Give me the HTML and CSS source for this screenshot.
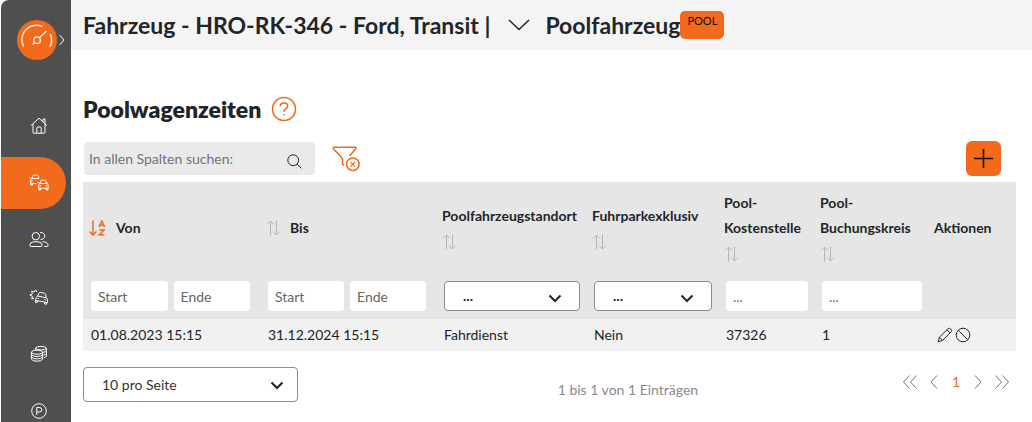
FILE: index.html
```
<!DOCTYPE html>
<html lang="de">
<head>
  <meta charset="UTF-8" />
  <meta name="viewport" content="width=device-width, initial-scale=1.0" />
  <title>Poolwagenzeiten</title>
  <link rel="stylesheet" href="styles.css">
</head>
<body>
  <div class="app">
    <aside class="sidebar">
      <div class="brand">
        <a href="#" class="logo" aria-label="Dashboard">
          <svg width="40" height="40" viewBox="0 0 40 40">
            <circle class="disc" cx="20" cy="20" r="20" />
            <path d="M6.5 26.5A14.5 14.5 0 0 1 25.5 6.6M33.3 14A14.5 14.5 0 0 1 32.8 26.8M22.3 17.8L29.5 11M15.5 24.5L17.6 22.4" />
            <circle cx="20" cy="20.2" r="3.3" />
          </svg>
        </a>
        <button class="expand" aria-label="Menü öffnen">
          <svg width="6" height="12" viewBox="0 0 6 12"><path d="M.5 1L5 6L.5 11" /></svg>
        </button>
      </div>
      <nav class="menu">
        <a href="#" aria-label="Start">
          <svg width="18" height="18" viewBox="0 0 18 18"><path d="M1 8.5L9 1.2L17 8.5M3 7V15.5Q3 16.2 3.7 16.2H14.3Q15 16.2 15 15.5V7M6.8 16V11Q6.8 10 7.8 10H10.2Q11.2 10 11.2 11V16M13 4.5V2H15V6.5" /></svg>
        </a>
        <a href="#" class="active" aria-label="Fahrzeuge">
          <svg width="20" height="18" viewBox="0 0 20 18"><path d="M7.5 9.5H1.5V6.5Q1.5 5 2.8 4.5L3.6 2.2Q3.9 1.2 5 1.2H8Q9 1.2 9.4 2.2L10 4M.3 3.7H1.8M2.8 4.5H10M2 7H3.7M1.8 9.5V11H3.6V9.5M9.5 14.2V11.5Q9.5 9.9 10.8 9.4L11.6 7.2Q11.9 6.2 13 6.2H15.7Q16.8 6.2 17.1 7.2L17.9 9.4Q19.2 9.9 19.2 11.5V14.2ZM9.8 14.2V15.9H11.6V14.2M17.1 14.2V15.9H18.9V14.2M10.8 9.4H17.9M10.5 11.8H12.2M16.5 11.8H18.2M8.3 8.6H9.8" /></svg>
        </a>
        <a href="#" aria-label="Fahrer">
          <svg width="20" height="18" viewBox="0 0 20 18"><circle cx="6.8" cy="5.2" r="3.7" /><path d="M11 1.7A3.5 3.5 0 1 1 11.5 8.4M.8 14.2Q1.2 10.8 4.5 10.8H9Q12.8 10.8 13.2 14.2Q13 15.5 11.8 15.5H2.2Q.8 15.5 .8 14.2ZM13.5 10.8Q18.5 10.6 19.2 14.2Q19 15.5 17.8 15.5H15.3" /></svg>
        </a>
        <a href="#" aria-label="Schäden">
          <svg width="20" height="18" viewBox="0 0 20 18"><path d="M5 10.2L2.8 11L3.4 8.3L.8 7L3.4 5.8L2.6 3.2L5.2 3.9L6.6 1.8L8 4M6.5 11.8Q6.8 9.3 8.6 8L9.9 5.2Q10.4 4.3 11.5 4.4L15.5 5.3Q16.7 5.7 16.8 6.8L17.2 9.8Q18.9 11 18.5 13L18.2 14.6L6.2 12.3ZM8.6 8L17.2 9.8M6.5 12.4L6.2 14.2L8.1 14.6L8.5 12.8M15.9 14.2L15.6 16L17.6 16.2L18 14.6M8.5 10.3L10 10.6M15.2 11.7L16.8 12" /></svg>
        </a>
        <a href="#" aria-label="Kosten">
          <svg width="18" height="18" viewBox="0 0 18 18"><ellipse cx="7" cy="7.2" rx="5.6" ry="2" /><path d="M1.4 7.2V14.2Q2.5 16.2 7 16.2T12.6 14.2V7.2M1.4 9.6Q2.5 11.5 7 11.5T12.6 9.6M1.4 12Q2.5 13.9 7 13.9T12.6 12M5.5 5V3.2Q6.5 1.4 11 1.4T16.4 3.2V11Q16 12.3 14 12.6M5.5 3.2Q6.5 5 11 5T16.4 3.2M13 7.3Q16 7 16.4 5.8M13.5 9.9Q16 9.5 16.4 8.4" /></svg>
        </a>
        <a href="#" aria-label="Parken">
          <svg width="18" height="18" viewBox="0 0 18 18"><circle cx="9" cy="9" r="7.3" /><path d="M6.8 13V5.5H9.5Q11.8 5.5 11.8 7.7T9.5 10H6.8" /></svg>
        </a>
      </nav>
    </aside>

    <div class="page">
      <header class="topbar">
        <h1>Fahrzeug - HRO-RK-346 - Ford, Transit |</h1>
        <button class="switcher" aria-label="Fahrzeug wechseln">
          <svg width="22" height="12" viewBox="0 0 22 12"><path d="M1 1L11 10.5L21 1" /></svg>
        </button>
        <h1>Poolfahrzeug</h1>
        <span class="badge">POOL</span>
      </header>

      <main class="content">
        <div class="heading">
          <h2>Poolwagenzeiten</h2>
          <a href="#" class="help" aria-label="Hilfe">
            <svg width="26" height="26" viewBox="0 0 26 26"><circle cx="13" cy="13" r="11.5" /><path d="M9.2 10.5Q9.2 7 13 7T16.6 10.2Q16.6 12 14.6 13T13 16M13 18V19.5" /></svg>
          </a>
        </div>

        <div class="toolbar">
          <div class="search">
            <input type="text" placeholder="In allen Spalten suchen:" aria-label="In allen Spalten suchen">
            <svg width="15" height="15" viewBox="0 0 15 15"><circle cx="6.2" cy="6.2" r="5.4" /><path d="M10.2 10.2L14.3 14.3" /></svg>
          </div>
          <button class="reset" aria-label="Filter zurücksetzen">
            <svg width="28" height="26" viewBox="0 0 28 26"><path d="M12 19.5L10.5 18V12.5L1.4 2.8Q.8 1.2 2.2 1.2H23Q24.8 1.2 23.8 2.8L17.5 10" /><circle cx="20.8" cy="18.2" r="6.3" /><path class="thin" d="M18.4 15.8L23.2 20.6M23.2 15.8L18.4 20.6" /></svg>
          </button>
          <button class="add" aria-label="Hinzufügen">
            <svg width="19" height="19" viewBox="0 0 19 19"><path d="M9.5 0V19M0 9.5H19" /></svg>
          </button>
        </div>

        <svg class="defs" aria-hidden="true">
          <symbol id="sort" viewBox="0 0 14 16"><path d="M4.5 15.5V1M1 4.5L4.5 1L8 4.5M10.5 .5V15M7 11.5L10.5 15L14 11.5" /></symbol>
          <symbol id="chevron" viewBox="0 0 14 9"><path d="M1.5 1.5L7 7L12.5 1.5" /></symbol>
        </svg>

        <table>
          <colgroup>
            <col class="c-from"><col class="c-to"><col class="c-place"><col class="c-excl"><col class="c-cost"><col class="c-book"><col class="c-act">
          </colgroup>
          <thead>
            <tr class="titles">
              <th>
                <div class="sortable">
                  <svg class="az" width="17" height="16" viewBox="0 0 17 16"><path d="M4 .5V15M.5 11.5L4 15L7.5 11.5" /><path d="M10 6.8L12.8 1L15.6 6.8M11 5.2H14.6M10.2 10H15.2L10.2 14.8H15.4" /></svg>
                  Von
                </div>
              </th>
              <th><div class="sortable"><svg class="sort" width="14" height="16"><use href="#sort" /></svg>Bis</div></th>
              <th>Poolfahrzeugstandort<br><svg class="sort" width="14" height="16"><use href="#sort" /></svg></th>
              <th>Fuhrparkexklusiv<br><svg class="sort" width="14" height="16"><use href="#sort" /></svg></th>
              <th>Pool-<br>Kostenstelle<br><svg class="sort" width="14" height="16"><use href="#sort" /></svg></th>
              <th>Pool-<br>Buchungskreis<br><svg class="sort" width="14" height="16"><use href="#sort" /></svg></th>
              <th>Aktionen</th>
            </tr>
            <tr class="filters">
              <td><div class="range"><input type="text" placeholder="Start" aria-label="Von Start"><input type="text" placeholder="Ende" aria-label="Von Ende"></div></td>
              <td><div class="range"><input type="text" placeholder="Start" aria-label="Bis Start"><input type="text" placeholder="Ende" aria-label="Bis Ende"></div></td>
              <td><div class="select"><select aria-label="Poolfahrzeugstandort"><option>...</option></select><svg width="14" height="9"><use href="#chevron" /></svg></div></td>
              <td><div class="select"><select aria-label="Fuhrparkexklusiv"><option>...</option></select><svg width="14" height="9"><use href="#chevron" /></svg></div></td>
              <td><input type="text" placeholder="..." aria-label="Pool-Kostenstelle"></td>
              <td><input type="text" placeholder="..." aria-label="Pool-Buchungskreis"></td>
              <td></td>
            </tr>
          </thead>
          <tbody>
            <tr>
              <td>01.08.2023 15:15</td>
              <td>31.12.2024 15:15</td>
              <td>Fahrdienst</td>
              <td>Nein</td>
              <td>37326</td>
              <td>1</td>
              <td>
                <div class="actions">
                  <button aria-label="Bearbeiten"><svg width="16" height="16" viewBox="0 0 16 16"><path d="M1.2 14.8L2.4 10.2L11.2 1.6Q12.4 .8 13.6 1.9Q15.2 3.4 14.2 4.8L5.6 13.4ZM2.4 10.2L5.6 13.4M10 2.8L13 6" /></svg></button>
                  <button aria-label="Sperren"><svg width="16" height="16" viewBox="0 0 16 16"><circle cx="8" cy="8" r="6.8" /><path d="M3.2 3.2L12.8 12.8" /></svg></button>
                </div>
              </td>
            </tr>
          </tbody>
        </table>

        <div class="footer">
          <div class="select page-size">
            <select aria-label="Einträge pro Seite"><option>10 pro Seite</option></select>
            <svg width="14" height="9"><use href="#chevron" /></svg>
          </div>
          <p class="count">1 bis 1 von 1 Einträgen</p>
          <div class="pager">
            <button aria-label="Erste Seite"><svg width="16" height="14" viewBox="0 0 16 14"><path d="M7.5 .5L1.5 7L7.5 13.5M14.5 .5L8.5 7L14.5 13.5" /></svg></button>
            <button aria-label="Vorherige Seite"><svg width="8" height="14" viewBox="0 0 8 14"><path d="M7 .5L1 7L7 13.5" /></svg></button>
            <a href="#">1</a>
            <button aria-label="Nächste Seite"><svg width="8" height="14" viewBox="0 0 8 14"><path d="M1 .5L7 7L1 13.5" /></svg></button>
            <button aria-label="Letzte Seite"><svg width="16" height="14" viewBox="0 0 16 14"><path d="M1.5 .5L7.5 7L1.5 13.5M8.5 .5L14.5 7L8.5 13.5" /></svg></button>
          </div>
        </div>
      </main>
    </div>
  </div>
</body>
</html>
```
FILE: styles.css
```
* {
  margin: 0;
  padding: 0;
  box-sizing: border-box;
}

body {
  font-family: Lato, "Liberation Sans", sans-serif;
  font-size: 14px;
  line-height: 20px;
  color: #212529;
  background: #fff;
}

button, input, select {
  font: inherit;
  color: inherit;
  border: none;
  background: none;
}

button {
  display: flex;
  align-items: center;
  justify-content: center;
  cursor: pointer;
}

svg {
  display: block;
  fill: none;
  stroke: currentColor;
}

.defs {
  width: 0;
  height: 0;
  position: absolute;
}

.app {
  display: flex;
  height: 100vh;
  padding-left: 1px;
  overflow: hidden;
}

/* sidebar */
.sidebar {
  flex: none;
  width: 70px;
  background: #4f4f4f;
  border-top-left-radius: 8px;
  color: #fff;
  overflow: hidden;
}

.brand {
  display: flex;
  align-items: center;
  gap: 2px;
  height: 100px;
  padding: 0 0 20px 16px;
}

.logo svg {
  color: #ffe6d6;
  stroke-width: 1.5;
}

.logo .disc {
  fill: #f26a1b;
  stroke: none;
}

.menu {
  display: flex;
  flex-direction: column;
  gap: 5px;
}

.menu a {
  display: flex;
  align-items: center;
  justify-content: center;
  width: 65px;
  height: 52px;
  padding-left: 10px;
  color: #fff;
  border-radius: 0 26px 26px 0;
}

.menu a.active {
  background: #f26a1b;
}

/* page */
.page {
  flex: 1;
  min-width: 0;
}

.topbar {
  display: flex;
  align-items: center;
  height: 50px;
  padding: 0 12px;
  background: #f4f4f4;
}

h1, h2 {
  font-size: 23px;
  line-height: 32px;
  white-space: nowrap;
}

h1 {
  font-weight: bold;
}

h2 {
  font-weight: 800;
}

.switcher {
  padding: 0 15px 0 18px;
}

.switcher svg {
  stroke-width: 1.5;
}

.badge {
  height: 28px;
  padding: 0 7px;
  font-size: 11px;
  color: #111;
  background: #f26a1b;
  border-radius: 5px;
}

.content {
  padding: 43px 16px 0 12px;
}

.heading {
  display: flex;
  align-items: center;
  gap: 10px;
  height: 32px;
}

.help {
  color: #f26a1b;
}

.help svg {
  stroke-width: 1.5;
}

.toolbar {
  display: flex;
  align-items: center;
  height: 35px;
  margin: 16px 0 6px;
  padding: 0 15px 0 1px;
}

.search {
  display: flex;
  align-items: center;
  width: 231px;
  height: 33px;
  padding: 0 13px 0 5px;
  background: #eaeaea;
  border-radius: 4px;
}

.search input {
  flex: 1;
  min-width: 0;
}

.search input::placeholder {
  color: #6c757d;
}

.search svg {
  margin-top: 5px;
}

.reset {
  margin-left: 17px;
  color: #f26a1b;
}

.reset svg {
  stroke-width: 1.5;
}

.reset .thin {
  stroke-width: 1.2;
}

.add {
  width: 35px;
  height: 35px;
  margin-left: auto;
  color: #111;
  background: #f26a1b;
  border-radius: 6px;
}

.add svg {
  stroke-width: 1.6;
}

/* table */
table {
  width: 100%;
  table-layout: fixed;
  border-collapse: collapse;
  text-align: left;
}

.c-from { width: 177px; }
.c-to { width: 176px; }
.c-place { width: 150px; }
.c-excl { width: 132px; }
.c-cost { width: 96px; }
.c-book { width: 114px; }
.c-act { width: 88px; }

thead {
  background: #e6e6e6;
}

th {
  height: 92px;
  padding: 8px 0 9px 6px;
  line-height: 25px;
  white-space: nowrap;
}

.sortable {
  display: flex;
  align-items: center;
  gap: 10px;
}

.sort {
  display: inline-block;
  vertical-align: middle;
  color: #b5b5b5;
}

.az {
  color: #f26a1b;
  stroke-width: 1.5;
}

td {
  padding: 6px 0 6px 8px;
}

.filters td {
  padding: 7px 6px 8px 8px;
}

.filters input {
  display: block;
  width: 100%;
  height: 30px;
  padding: 0 7px;
  background: #fff;
  border-radius: 4px;
}

.filters input::placeholder {
  color: #666;
}

.range {
  display: flex;
  gap: 6px;
  padding-right: 4px;
}

.select {
  display: grid;
  align-items: center;
}

.select select,
.select svg {
  grid-area: 1 / 1;
}

.select select {
  width: 100%;
  height: 30px;
  padding: 0 18px;
  appearance: none;
  background: #fff;
  border: 1px solid #8c8c8c;
  border-radius: 4px;
}

.filters select {
  font-weight: bold;
}

.select svg {
  justify-self: end;
  margin: 4px 18px 0 0;
  stroke-width: 2;
  pointer-events: none;
}

tbody tr {
  background: #f1f1f1;
}

.actions {
  display: flex;
  gap: 2px;
  padding-left: 1px;
}

/* footer */
.footer {
  display: flex;
  align-items: center;
  margin-top: 16px;
}

.page-size {
  width: 215px;
}

.page-size select {
  height: 35px;
  color: #333;
}

.page-size svg {
  margin: 1px 14px 0 0;
}

.count {
  flex: 1;
  padding: 10px 0 0 56px;
  text-align: center;
  color: #8a8a8a;
}

.pager {
  display: flex;
  align-items: center;
  gap: 12px;
  padding: 0 6px 5px 0;
  color: #6c757d;
}

.pager a {
  padding: 0 2px;
  color: #f26a1b;
  text-decoration: none;
}
```
